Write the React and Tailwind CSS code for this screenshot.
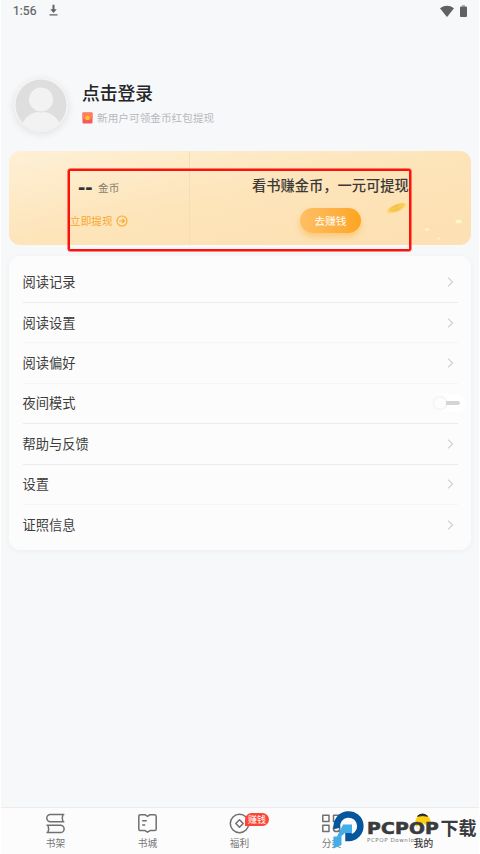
const rows = ['阅读记录', '阅读设置', '阅读偏好', '夜间模式', '帮助与反馈', '设置', '证照信息'];
const strongLines = [0, 3, 4];

function Chevron() {
  return (
    <svg className="mr-[4px] h-[10px] w-[7px]" viewBox="0 0 7 10" fill="none" stroke="#cdcdcd" strokeWidth="1.1">
      <path d="M1 .7 5.6 5 1 9.3" />
    </svg>
  );
}

function Toggle() {
  return (
    <div className="-mr-[8px] flex h-[18px] w-[34px] items-center rounded-full bg-white pl-[2px]">
      <div className="size-[12px] rounded-full bg-[#fdfdfd] shadow-[0_0_2px_1px_#ededed]" />
      <div className="h-[4px] w-[14px] rounded-r-full bg-[#d5d5d5]" />
    </div>
  );
}

function StatusBar() {
  return (
    <header className="flex h-[23px] items-center pl-[13px] pr-[13px] text-[#606163]">
      <span className="font-['Roboto'] text-[12px] leading-[23px] tracking-[0.100px] [-webkit-text-stroke:0.200px_currentColor]">1:56</span>
      <svg className="ml-[12px] mb-[2px] h-[13px] w-[9px]" viewBox="0 0 10 13" fill="currentColor">
        <path d="M3.900 0h2.200v5.200h2.500L5 9.200 1.400 5.200h2.500zM.5 10.700h9v1.400h-9z" />
      </svg>
      <svg className="ml-auto mb-[2px] h-[12px] w-[14px]" viewBox="0 0 14 12" fill="currentColor">
        <path d="M0 3.200Q7-1.700 14 3.200L7.300 11.700q-.3.300-.6 0z" />
      </svg>
      <svg className="ml-[6px] mb-[2px] h-[12px] w-[7px]" viewBox="0 0 7 12" fill="currentColor">
        <path d="M2 0h3v1.500H2z" opacity=".5" />
        <rect y="1.400" width="7" height="10.600" rx="1" />
      </svg>
    </header>
  );
}

function Profile() {
  return (
    <section className="mt-[55.500px] flex h-[54px] items-start pl-[14px]">
      <div className="-mt-[0.500px] size-[54px] shrink-0 rounded-full bg-[#f4f4f4] shadow-[0_2px_6px_1px_#e3e5e8]">
        <svg className="size-[54px]" viewBox="0 0 54 54">
          <defs>
            <clipPath id="face"><circle cx="27" cy="27" r="25.500" /></clipPath>
          </defs>
          <circle cx="27" cy="27" r="25.500" fill="#dedede" />
          <g clipPath="url(#face)" fill="#f2f2f2">
            <circle cx="27" cy="54" r="20.500" />
            <circle cx="27" cy="21.500" r="13" fill="#dedede" />
            <circle cx="27" cy="21.500" r="12" />
          </g>
        </svg>
      </div>
      <div className="ml-[14px] flex flex-col">
        <h1 className="text-[17.800px] font-medium leading-[26px] text-[#242527]">点击登录</h1>
        <div className="mt-[4px] flex h-[18px] items-center">
          <svg className="mr-[4px] h-[12px] w-[11px]" viewBox="0 0 11 12">
            <rect x=".5" y=".5" width="10" height="11" rx="1" fill="#f65b5c" />
            <path d="M.5.500h10V6.500Q5.500 9.300.5 6.500z" fill="#fb805c" />
            <circle cx="5.500" cy="6" r="2.200" fill="#ffc51d" />
          </svg>
          <span className="text-[10.670px] leading-[18px] text-[#b8b9bc]">新用户可领金币红包提现</span>
        </div>
      </div>
    </section>
  );
}

function Coins() {
  return (
    <section className="relative mx-[9px] mt-[18.900px] flex h-[94px] rounded-[11px] bg-linear-to-br from-[#fef0d6] from-0% via-[#fde4b9] via-50% to-[#fde0b3]">
      <div className="flex w-[181px] flex-col border-r border-[#f6ddb3] pl-[61px]">
        <div className="mt-[27px] flex h-[20px] items-center pl-[8px]">
          <span className="-mt-[3px] w-[16px] whitespace-nowrap font-['Liberation_Sans'] text-[22px] font-bold leading-[20px] text-[#343230]">--</span>
          <span className="ml-[4px] text-[10.670px] leading-[18px] text-[#867c6c]">金币</span>
        </div>
        <div className="mt-[14px] flex h-[18px] items-center text-[#f9a62b]">
          <span className="text-[10.670px] leading-[18px]">立即提现</span>
          <svg className="ml-[3px] size-[12px]" viewBox="0 0 12 12" fill="none" stroke="currentColor" strokeWidth="1.100">
            <circle cx="6" cy="6" r="5" />
            <path d="M3.200 6h5M6.300 3.900 8.400 6 6.300 8.100" />
          </svg>
        </div>
      </div>
      <div className="flex flex-1 flex-col items-center">
        <p className="mt-[23.700px] text-[14.250px] font-medium leading-[20px] text-[#3a3938]">看书赚金币，一元可提现</p>
        <button className="mt-[13px] h-[25px] w-[61px] rounded-full bg-linear-to-r from-[#febf63] to-[#fea51c] text-[10.670px] leading-[25px] text-white shadow-[0_4px_6px_#fbc87a]">去赚钱</button>
      </div>
      <svg className="absolute bottom-0 right-0 h-[50px] w-[100px]" viewBox="0 0 100 50">
        <defs>
          <linearGradient id="coin">
            <stop stopColor="#ffdb73" />
            <stop offset=".5" stopColor="#f8c54a" />
            <stop offset="1" stopColor="#ffe078" />
          </linearGradient>
        </defs>
        <g transform="rotate(-22 25.500 13)">
          <ellipse cx="25.500" cy="13" rx="10.700" ry="3.500" fill="url(#coin)" />
          <ellipse cx="26" cy="12.500" rx="7.500" ry="1.700" fill="none" stroke="#f2b843" strokeWidth=".7" />
        </g>
        <ellipse cx="87.500" cy="26.500" rx="3.200" ry="1.900" fill="#fff6c9" />
        <ellipse cx="56" cy="34.500" rx="2.200" ry="1.500" fill="#fff3c8" />
        <ellipse cx="67.500" cy="43.500" rx="1.300" ry="1" fill="#fff3c8" />
      </svg>
      <div className="absolute left-[59px] top-[18px] h-[82px] w-[343px] rounded-[2px] border-[2.500px] border-[#fd120b] shadow-[0_0_0_0.500px_#fd120b]" />
    </section>
  );
}

function Menu() {
  return (
    <section className="mx-[9px] mt-[11px] h-[293.500px] rounded-[11px] bg-[#fcfcfc] px-[13.500px] pt-[6px] shadow-[0_1px_5px_#eceef0]">
      {rows.map((label, i) => (
        <div
          key={label}
          className={
            'flex h-[40.430px] items-center justify-between border-b ' +
            (i === 6 ? 'border-transparent' : strongLines.includes(i) ? 'border-[#ebebeb]' : 'border-[#f5f5f5]')
          }
        >
          <span className="text-[13.250px] leading-[20px] text-[#3d3d3d]">{label}</span>
          {i === 3 ? <Toggle /> : <Chevron />}
        </div>
      ))}
    </section>
  );
}

function NavItem({ label, active, children }) {
  return (
    <div className="relative flex w-[92px] flex-col items-center pt-[5px]">
      <svg className="h-[21px] w-[21px]" viewBox="0 0 21 21" fill="none" stroke="#707070" strokeWidth="1.500" strokeLinejoin="round">
        {children}
      </svg>
      <span className={'mt-[2px] text-[9.700px] leading-[14px] ' + (active ? 'font-medium text-[#373737]' : 'text-[#777]')}>{label}</span>
    </div>
  );
}

function Nav() {
  return (
    <nav className="relative mt-auto flex h-[47px] border-t border-[#ececec] bg-[#fcfcfc] pl-[9.500px]">
      <NavItem label="书架">
        <path d="M19.300 1.500H5.400a3.600 3.600 0 0 0 0 7.200h13.900M17.900 1.500q-1.300 3.600 0 7.200M1.500 12.300h14a3.600 3.600 0 0 1 0 7.200h-14M3 12.300q1.300 3.600 0 7.200" />
      </NavItem>
      <NavItem label="书城">
        <path d="M3.500 1.700H8l2.500 1.600L13 1.700h4.500q1.700 0 1.700 1.700v12.500q0 1.700-1.700 1.700H13l-2.500 1.600L8 17.600H3.500q-1.700 0-1.700-1.700V3.400q0-1.700 1.700-1.700zM5.200 7.700h4.600M5.200 12h3" />
      </NavItem>
      <div className="relative">
        <NavItem label="福利">
          <circle cx="10.500" cy="10.500" r="9.200" />
          <path d="m10.500 6.800 3.700 3.700-3.700 3.700-3.700-3.700z" />
        </NavItem>
        <span className="absolute left-[51.500px] top-[5px] flex h-[12.500px] w-[24px] items-center justify-center rounded-full rounded-bl-[2px] bg-[#fb4738] text-[9px] leading-none text-white">赚钱</span>
      </div>
      <NavItem label="分类">
        <path d="M1.800 2.300h6.200v6.200H1.800zM12.500 2.300h6.200v6.200h-6.200zM1.800 12.300h6.200v6.200H1.800z" />
        <circle cx="15.600" cy="15.400" r="3.200" />
        <path d="m18 18 2 2" />
      </NavItem>
      <NavItem label="我的" active>
        <circle cx="10" cy="10" r="7.500" fill="#fff" stroke="#dedede" strokeWidth="1" />
        <path d="M2.500 9q.5-7.500 7.500-7.500 7 0 7.500 7.500v5q-5-1-7-4-3 3.500-8 3z" fill="#ffcf12" stroke="none" />
        <path d="M4.500 3.200Q9.500-1.200 14.500 3.200q-4.500-1.200-10 0z" fill="#242424" stroke="#242424" strokeWidth="1" />
      </NavItem>
      <div className="absolute left-[332px] top-0 flex h-[46px] items-start">
        <svg className="mt-[2px] h-[40px] w-[34px]" viewBox="0 0 34 40">
          <path d="M5 18.500A11.800 11.800 0 1 1 16.500 28v-7" fill="none" stroke="#06569e" strokeWidth="6.500" />
          <path d="M11 14.500h9v8.500h-7L9.500 26v9L1.500 38.500V26.500H5z" fill="#43adea" />
        </svg>
        <div className="ml-[1px] pt-[9px] text-[#3a3b3d]">
          <div className="flex h-[20px] items-center whitespace-nowrap">
            <span className="w-[73.500px]">
              <span className="inline-block origin-left scale-x-[1.170] font-['DejaVu_Sans'] text-[16px] font-bold leading-[20px] tracking-[0.200px] [-webkit-text-stroke:0.600px_currentColor]">PCPOP</span>
            </span>
            <span className="text-[18px] font-bold leading-[20px]">下载</span>
          </div>
          <div className="mt-[-1px] font-['DejaVu_Sans'] text-[5.500px] leading-[8px] tracking-[0.600px] text-[#77797b]">PCPOP Downlo</div>
        </div>
      </div>
    </nav>
  );
}

export default function App() {
  return (
    <main className="flex h-[854px] w-[480px] flex-col overflow-hidden border-x border-white bg-[#f6f8fa] font-['Noto_Sans_CJK_SC',sans-serif]">
      <div className="-mx-px flex flex-1 flex-col">
        <StatusBar />
        <Profile />
        <Coins />
        <Menu />
        <Nav />
      </div>
    </main>
  );
}
